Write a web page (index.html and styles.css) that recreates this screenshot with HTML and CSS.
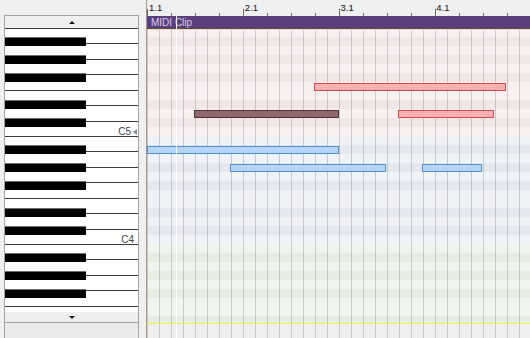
FILE: index.html
```html
<!DOCTYPE html>
<html lang="en">
<head>
  <meta charset="UTF-8" />
  <meta name="viewport" content="width=device-width, initial-scale=1.0"/>
  <title>MIDI Clip</title>
  <link rel="stylesheet" href="styles.css">
</head>
<body>
  <div class="editor">
    <!-- Piano keys -->
    <div class="keys">
      <div class="keys-frame">
        <div class="scroll"><span class="arrow-up"></span></div>
        <div class="piano">
          <div class="oct">
            <span class="label">C5<svg class="preview" width="4" height="6" viewBox="0 0 4 6"><path d="M4 0 L0 3 L4 6 Z" fill="#8a8f98"/></svg></span>
          </div>
          <div class="oct">
            <span class="label c4">C4</span>
          </div>
          <div class="oct"></div>
        </div>
        <div class="scroll bottom"><span class="arrow-down"></span></div>
        <div class="keys-foot"></div>
      </div>
    </div>

    <!-- Note editor -->
    <div class="roll">
      <div class="ruler">
        <span class="bar">1.1</span>
        <span class="bar">2.1</span>
        <span class="bar">3.1</span>
        <span class="bar">4.1</span>
      </div>
      <div class="clip-head">MIDI Clip</div>
      <div class="grid">
        <div class="rows">
          <div class="band pink"></div>
          <div class="band blue"></div>
          <div class="band green"></div>
        </div>
        <div class="note red" style="left: 167px; top: 53px; width: 192px;"></div>
        <div class="note brown" style="left: 47px; top: 80px; width: 145px;"></div>
        <div class="note red" style="left: 251px; top: 80px; width: 96px;"></div>
        <div class="note blue" style="left: 0px; top: 116px; width: 192px;"></div>
        <div class="note blue" style="left: 83px; top: 134px; width: 156px;"></div>
        <div class="note blue" style="left: 275px; top: 134px; width: 60px;"></div>
      </div>
      <div class="roll-foot"></div>
      <div class="marker"></div>
    </div>
  </div>
</body>
</html>
```

FILE: styles.css
```css
* {
  margin: 0;
  padding: 0;
  box-sizing: border-box;
}

body {
  width: 530px;
  height: 338px;
  overflow: hidden;
  background: #f0f0f0;
  font-family: "Liberation Sans", Arial, sans-serif;
}

.editor {
  display: flex;
  height: 338px;
}

/* Piano keys */
.keys {
  width: 146px;
  padding: 15px 0 0 4px;
}

.keys-frame {
  width: 135px;
  height: 323px;
  border: 1px solid #a3a3a3;
  border-bottom: none;
  display: flex;
  flex-direction: column;
}

.scroll {
  height: 12px;
  background: #f0f0f0;
  display: flex;
  justify-content: center;
  align-items: center;
}

.scroll.bottom {
  height: 11px;
  background: #eeeeee;
  border-bottom: 1px solid #a3a3a3;
}

.arrow-up {
  border-left: 3px solid transparent;
  border-right: 3px solid transparent;
  border-bottom: 3px solid #111;
}

.arrow-down {
  border-left: 3px solid transparent;
  border-right: 3px solid transparent;
  border-top: 3px solid #111;
}

.piano {
  height: 284px;
  overflow: hidden;
  background: #fff;
}

.oct {
  height: 108px;
  display: flex;
  justify-content: flex-end;
  align-items: flex-end;
  background:
    linear-gradient(to bottom,
      transparent 0 9px, #6e6e6e 9px 10px, #000 10px 18px,
      transparent 18px 27px, #6e6e6e 27px 28px, #000 28px 36px,
      transparent 36px 45px, #6e6e6e 45px 46px, #000 46px 54px,
      transparent 54px 72px, #6e6e6e 72px 73px, #000 73px 81px,
      transparent 81px 90px, #6e6e6e 90px 91px, #000 91px 99px,
      transparent 99px 108px) left top / 81px 108px no-repeat,
    repeating-linear-gradient(to bottom, #3a3a3a 0 1px, #fff 1px 15.4286px);
}

.label {
  height: 9px;
  line-height: 9px;
  font-size: 10px;
  color: #3b3f46;
  padding-right: 1px;
  display: flex;
  align-items: center;
  gap: 2px;
}

.label.c4 {
  padding-right: 4px;
}

.keys-foot {
  flex: 1;
  background: #ebebeb;
}

/* Note editor */
.roll {
  position: relative;
  width: 384px;
  border-left: 1px solid #a8968a;
  display: flex;
  flex-direction: column;
}

.ruler {
  height: 16px;
  display: flex;
  background:
    repeating-linear-gradient(90deg, #6a6a6a 0 1px, transparent 1px 96px) left bottom / 100% 7px no-repeat,
    repeating-linear-gradient(90deg, #6a6a6a 0 1px, transparent 1px 24px) left bottom / 100% 3px no-repeat,
    #f0f0f0;
}

.bar {
  width: 96px;
  padding: 3px 0 0 2px;
  font-size: 9.5px;
  line-height: 10px;
  color: #111;
}

.clip-head {
  height: 14px;
  padding-left: 4px;
  background: #5b3f7d;
  border-bottom: 1px solid #ece88a;
  color: #d8cdea;
  font-size: 10px;
  line-height: 13px;
}

.grid {
  position: relative;
  height: 293px;
  overflow: hidden;
}

.grid::before {
  content: "";
  position: absolute;
  inset: 0;
  background: repeating-linear-gradient(90deg, rgba(0, 0, 0, 0.17) 0 1px, transparent 1px 12px);
}

.rows {
  margin-top: -2px;
}

.band {
  height: 108px;
  background: linear-gradient(to bottom,
    var(--l) 0 9px, var(--d) 9px 18px,
    var(--l) 18px 27px, var(--d) 27px 36px,
    var(--l) 36px 45px, var(--d) 45px 54px,
    var(--l) 54px 72px, var(--d) 72px 81px,
    var(--l) 81px 90px, var(--d) 90px 99px,
    var(--l) 99px 108px);
}

.band.pink {
  --l: #f9f0f0;
  --d: #f2e7e7;
}

.band.blue {
  --l: #eff2f7;
  --d: #e5e9ef;
}

.band.green {
  --l: #eff6ed;
  --d: #e6eee4;
}

.note {
  position: absolute;
  height: 8px;
  border: 1px solid;
}

.note.red {
  background: #ffb1b1;
  border-color: #cf4c4c;
}

.note.brown {
  background: #8e6969;
  border-color: #4f3535;
}

.note.blue {
  background: #b5d5f7;
  border-color: #548cd4;
}

.roll-foot {
  height: 15px;
  border-top: 1px solid #f2f23c;
  background:
    repeating-linear-gradient(90deg, rgba(0, 0, 0, 0.17) 0 1px, transparent 1px 12px),
    #efefef;
}

/* Start marker */
.marker {
  position: absolute;
  left: 29px;
  top: 16px;
  bottom: 0;
  width: 1px;
  background: rgba(255, 255, 255, 0.9);
}
```
